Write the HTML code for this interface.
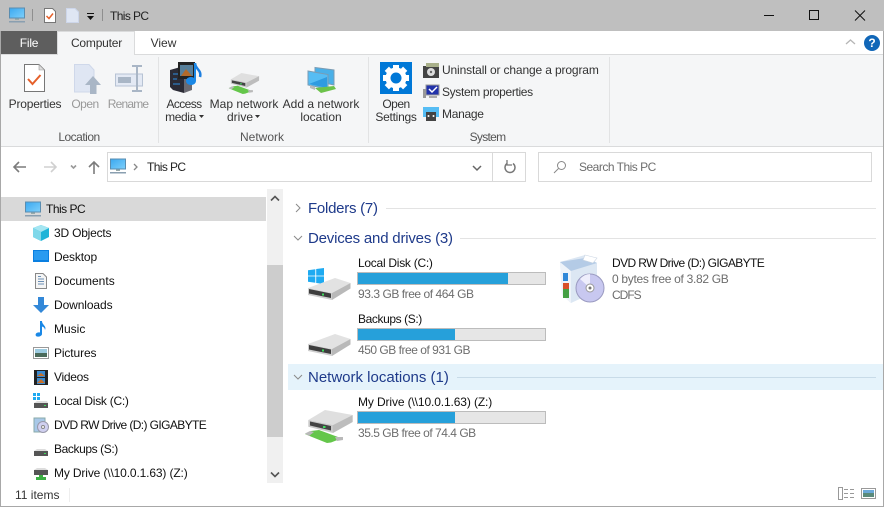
<!DOCTYPE html>
<html><head><meta charset="utf-8"><title>This PC</title>
<style>
html,body{margin:0;padding:0}
body{width:884px;height:507px;overflow:hidden;background:#fff;position:relative;font:12px/16px "Liberation Sans",sans-serif;color:#1a1a1a}
.t{position:absolute;white-space:nowrap;line-height:16px}
.c{text-align:center;transform:translateX(-50%)}
.b{position:absolute}
svg{position:absolute;overflow:visible}
.g{color:#6d6d6d}
.h{color:#1e3a8a;font-size:15px;line-height:20px}
.bar{position:absolute;left:357px;width:187px;height:11px;border:1px solid #bcbcbc;background:#e6e6e6}
.bar i{display:block;height:11px;background:#26a0da}
.nv{color:#111}
</style></head><body>
<svg width="0" height="0" style="position:absolute"><defs>
<linearGradient id="scr" x1="0" y1="0" x2="1" y2="1"><stop offset="0" stop-color="#3aa8f0"/><stop offset="1" stop-color="#7ed0fb"/></linearGradient>
<symbol id="pc" viewBox="0 0 16 16"><rect x="0.500" y="1" width="15" height="10" fill="url(#scr)" stroke="#5a8db0"/><rect x="6" y="11.500" width="4" height="1.500" fill="#9aa"/><rect y="14" width="16" height="1.500" fill="#8a9fb0"/></symbol>
<symbol id="hdd" viewBox="0 0 43 23"><path d="M0 10 27 0 42.500 5 24 15z" fill="#e2e2e2"/><path d="M24 15 42.500 5V10.500L24 22z" fill="#b9b9b9"/><path d="M0 10 24 15V22L0 17z" fill="#cfcfcf"/><path d="M1 11 23 15.500V20L1 15.500z" fill="#3d3d3d"/><rect x="14" y="15.500" width="2" height="2" fill="#3ddc5c"/></symbol>
<symbol id="net" viewBox="0 0 48 33"><path d="M3.300 10 20 0 47.700 5 28 15z" fill="#dfdfdf"/><path d="M28 15 47.700 5V12L28 23z" fill="#bdbdbd"/><path d="M3.300 10 28 15V23L3.300 16.700z" fill="#c9c9c9"/><path d="M5 11.500 26 16V20.500L5 15.500z" fill="#444"/><rect x="18" y="16" width="2.500" height="2" fill="#3ddc5c"/><path d="M0 24 6 21 14 20 33 27 35 29 26 32.500 22 33 7 27z" fill="#64c64a"/><path d="M0 23.500 5 21 9 22 4 26zM30 27 38 27 38 30 32 31z" fill="#b9b9b9"/></symbol>
</defs></svg>

<!-- title bar -->
<div class="b" style="left:0;top:0;width:884px;height:31px;background:#bfbfbf"></div>
<svg style="left:9px;top:7px" width="16" height="16"><use href="#pc"/></svg>
<div class="b" style="left:32px;top:9px;width:1px;height:12px;background:#8f8f8f"></div>
<svg style="left:44px;top:8px" width="12" height="15" viewBox="0 0 12 15"><path d="M.5.500H8.500L11.500 3.500V14.500H.5z" fill="#fff" stroke="#777"/><path d="M2.500 8 5 10.500 9 5.500" fill="none" stroke="#e5602a" stroke-width="1.500"/></svg>
<svg style="left:66px;top:8px" width="13" height="15" viewBox="0 0 13 15"><path d="M.5.500H9L12.500 4V14.500H.5z" fill="#dfe6f3" stroke="#cdd6ea"/></svg>
<svg style="left:86px;top:13px" width="9" height="9" viewBox="0 0 9 9"><rect x="1" y="0" width="7" height="1" fill="#111"/><path d="M1 3H8L4.500 7z" fill="#111"/></svg>
<div class="b" style="left:102px;top:9px;width:1px;height:12px;background:#8f8f8f"></div>
<div class="t" style="left:110px;top:8px;color:#222;letter-spacing:-.6px">This PC</div>
<svg style="left:760px;top:8px" width="120" height="16" viewBox="0 0 120 16" fill="none" stroke="#111"><path d="M4 7.500H14"/><rect x="49.500" y="2.500" width="9" height="9"/><path d="M95 2.500 105 12.500M105 2.500 95 12.500"/></svg>

<!-- tabs -->
<div class="b" style="left:0;top:31px;width:884px;height:24px;background:#fff"></div>
<div class="b" style="left:1px;top:31px;width:56px;height:23px;background:#5e5e5e"></div>
<div class="t c" style="left:29px;top:35px;color:#fff;letter-spacing:-.2px">File</div>
<div class="b" style="left:57px;top:31px;width:78px;height:24px;background:#f5f6f7;border:1px solid #dadbdc;border-bottom:0;box-sizing:border-box;z-index:2"></div>
<div class="t c" style="left:96.500px;top:35px;z-index:3;color:#333;letter-spacing:-.2px">Computer</div>
<div class="t c" style="left:163.500px;top:35px;color:#333">View</div>
<svg style="left:844px;top:37px" width="14" height="10" viewBox="0 0 14 10" fill="none" stroke="#b5b5b5" stroke-width="1.300"><path d="M2 7 6.500 3 11 7"/></svg>
<div class="b" style="left:864px;top:35px;width:16px;height:16px;border-radius:50%;background:#1167b8;color:#fff;font:bold 12px/16px 'Liberation Sans',sans-serif;text-align:center">?</div>

<!-- ribbon -->
<div class="b" style="left:1px;top:54px;width:882px;height:1px;background:#dadbdc"></div>
<div class="b" style="left:1px;top:55px;width:882px;height:91px;background:#f5f6f7"></div>
<div class="b" style="left:0;top:146px;width:884px;height:1px;background:#dadbdc"></div>
<div class="b" style="left:158px;top:57px;width:1px;height:86px;background:#e2e3e4"></div>
<div class="b" style="left:368px;top:57px;width:1px;height:86px;background:#e2e3e4"></div>
<div class="b" style="left:609px;top:57px;width:1px;height:86px;background:#e2e3e4"></div>

<svg style="left:24px;top:64px" width="21" height="28" viewBox="0 0 21 28"><path d="M.5.500H15L20.500 6V27.500H.5z" fill="#fff" stroke="#777"/><path d="M15 .5V6H20.500z" fill="#ddd" stroke="#999" stroke-width=".6"/><path d="M4 15 8.500 20 16.500 11" fill="none" stroke="#e5602a" stroke-width="2"/></svg>
<svg style="left:74px;top:64px" width="27" height="30" viewBox="0 0 27 30"><path d="M.5.500H15L20 6V28H.5z" fill="#dfe6f3" stroke="#cfd8ea"/><path d="M11 21 19 12 27 21H22.500V30H16V21z" fill="#a9b6c6"/></svg>
<svg style="left:115px;top:65px" width="28" height="27" viewBox="0 0 28 27"><rect x=".5" y="9" width="27" height="12" fill="#e3e9f4" stroke="#b7c3d4"/><rect x="3" y="12" width="13" height="6" fill="#a9b6c6"/><path d="M17 1H27M22 1V26M17 26H27" fill="none" stroke="#a9b6c6" stroke-width="2"/></svg>
<div class="t c" style="left:35px;top:96px;color:#333;letter-spacing:-.2px">Properties</div>
<div class="t c" style="left:85px;top:96px;color:#999;letter-spacing:-.5px">Open</div>
<div class="t c" style="left:128px;top:96px;color:#999;letter-spacing:-.8px">Rename</div>
<div class="t c" style="left:79px;top:129px;color:#555;letter-spacing:-.5px">Location</div>

<svg style="left:170px;top:62px" width="32" height="31" viewBox="0 0 32 31"><path d="M0 8 14 4V31L3 28 0 25z" fill="#2b2b36"/><path d="M14 6 22 9V28L14 31z" fill="#6a6a72"/><path d="M3 12H9M3 17H7M3 22H10" stroke="#2e8ee0"/><rect x="8" y="0" width="17" height="17" fill="#222"/><rect x="10" y="3" width="13" height="11" fill="#577f9a"/><path d="M11 14 16 7 22 14z" fill="#b36a2a"/><path d="M25 1C25 7 32 8 30 15" fill="none" stroke="#1d7fe0" stroke-width="2.500"/><ellipse cx="21" cy="19" rx="5" ry="4" fill="#1a88e6"/><path d="M25 19V1" stroke="#1a88e6" stroke-width="2"/></svg>
<svg style="left:228px;top:73px" width="32" height="21"><use href="#net"/></svg>
<svg style="left:307px;top:67px" width="29" height="27" viewBox="0 0 29 27"><path d="M8 .5 27 3V18L8 14z" fill="#4ab0e8" stroke="#7a9cb4"/><path d="M1 4 21 7.500V22L1 18z" fill="#56bdf4" stroke="#7a9cb4"/><path d="M2 17 20 10V21z" fill="#2f9be0"/><path d="M8 21 27 19 29 22 14 26z" fill="#6cc24a"/><path d="M3 18 8 20 8 23 3 21z" fill="#bbb"/></svg>
<div class="t c" style="left:184px;top:96px;color:#333;letter-spacing:-.6px">Access</div>
<div class="t c" style="left:180.500px;top:109px;color:#333;letter-spacing:-.4px">media</div>
<svg style="left:199px;top:115px" width="6" height="4"><path d="M0 0H5L2.500 3z" fill="#333"/></svg>
<div class="t c" style="left:244px;top:96px;color:#333">Map network</div>
<div class="t c" style="left:240px;top:109px;color:#333">drive</div>
<svg style="left:255px;top:115px" width="6" height="4"><path d="M0 0H5L2.500 3z" fill="#333"/></svg>
<div class="t c" style="left:321px;top:96px;color:#333">Add a network</div>
<div class="t c" style="left:321px;top:109px;color:#333">location</div>
<div class="t c" style="left:262px;top:129px;color:#555">Network</div>

<div class="b" style="left:380px;top:62px;width:32px;height:32px;background:#0078d7"></div>
<svg style="left:380px;top:62px" width="32" height="32" viewBox="0 0 32 32"><circle cx="16" cy="16" r="8" fill="none" stroke="#fff" stroke-width="5"/><g fill="#fff"><rect x="13" y="3" width="6" height="26"/><rect x="13" y="3" width="6" height="26" transform="rotate(45 16 16)"/><rect x="13" y="3" width="6" height="26" transform="rotate(90 16 16)"/><rect x="13" y="3" width="6" height="26" transform="rotate(135 16 16)"/></g><circle cx="16" cy="16" r="8" fill="#fff"/><circle cx="16" cy="16" r="5.500" fill="#0078d7"/></svg>
<div class="t c" style="left:396px;top:96px;color:#333;letter-spacing:-.5px">Open</div>
<div class="t c" style="left:396px;top:109px;color:#333;letter-spacing:-.25px">Settings</div>
<svg style="left:423px;top:62px" width="16" height="16" viewBox="0 0 16 16"><rect x="0" y="4" width="16" height="12" fill="#444"/><rect x="3" y="1" width="13" height="4" fill="#a9b08a"/><circle cx="8" cy="10" r="4" fill="#ddd"/><circle cx="8" cy="10" r="1.200" fill="#666"/></svg>
<svg style="left:423px;top:84px" width="16" height="16" viewBox="0 0 16 16"><rect x="3" y="1" width="13" height="10" fill="#2233aa" stroke="#999"/><path d="M6 5 9 8 14 3" fill="none" stroke="#fff" stroke-width="1.500"/><rect x="0" y="5" width="3" height="9" fill="#999"/><rect x="6" y="12" width="8" height="2" fill="#aaa"/></svg>
<svg style="left:423px;top:106px" width="16" height="16" viewBox="0 0 16 16"><rect x="0" y="1" width="16" height="10" fill="#56bdf4"/><rect x="3" y="6" width="10" height="9" fill="#444"/><circle cx="5.500" cy="10" r="1" fill="#fff"/><circle cx="10.500" cy="10" r="1" fill="#fff"/></svg>
<div class="t" style="left:442px;top:62px;color:#333;letter-spacing:-.14px">Uninstall or change a program</div>
<div class="t" style="left:442px;top:84px;color:#333;letter-spacing:-.35px">System properties</div>
<div class="t" style="left:442px;top:106px;color:#333;letter-spacing:-.3px">Manage</div>
<div class="t c" style="left:487.500px;top:129px;color:#555;letter-spacing:-.7px">System</div>

<!-- nav -->
<svg style="left:12px;top:159px" width="96" height="16" viewBox="0 0 96 16" fill="none" stroke-width="1.600"><path d="M2 8H14M7 3 2 8 7 13" stroke="#7c7c7c"/><path d="M32 8H44M39 3 44 8 39 13" stroke="#d0d0d0"/><path d="M59 6.500 61.500 9 64 6.500" stroke="#999"/><path d="M82 15V3M77 8 82 3 87 8" stroke="#7c7c7c"/></svg>
<div class="b" style="left:107px;top:152px;width:419px;height:30px;border:1px solid #d9d9d9;box-sizing:border-box"></div>
<div class="b" style="left:492px;top:153px;width:1px;height:28px;background:#d9d9d9"></div>
<svg style="left:110px;top:158px" width="16" height="16"><use href="#pc"/></svg>
<svg style="left:133px;top:163px" width="6" height="8" viewBox="0 0 6 8"><path d="M1 1 4 4 1 7" fill="none" stroke="#888" stroke-width="1.300"/></svg>
<div class="t" style="left:147px;top:159px;color:#222;letter-spacing:-.6px">This PC</div>
<svg style="left:472px;top:165px" width="10" height="6" viewBox="0 0 10 6"><path d="M1 1 5 5 9 1" fill="none" stroke="#666" stroke-width="1.500"/></svg>
<svg style="left:504px;top:160px" width="12" height="14" viewBox="0 0 12 14"><path d="M3 3.500A5 5 0 1 0 9 3.500" fill="none" stroke="#777" stroke-width="1.500"/><path d="M3 0V5H8" fill="none" stroke="#777" stroke-width="1.300"/></svg>
<div class="b" style="left:538px;top:152px;width:334px;height:30px;border:1px solid #d9d9d9;box-sizing:border-box"></div>
<svg style="left:553px;top:160px" width="14" height="14" viewBox="0 0 14 14" fill="none" stroke="#888"><circle cx="8.500" cy="5.500" r="4"/><path d="M5.500 8.500 1 13"/></svg>
<div class="t" style="left:579px;top:159px;color:#6d6d6d;letter-spacing:-.5px">Search This PC</div>

<!-- sidebar -->
<div class="b" style="left:1px;top:197px;width:265px;height:24px;background:#d9d9d9"></div>
<svg style="left:25px;top:201px" width="16" height="16"><use href="#pc"/></svg>
<div class="t nv" style="left:46px;top:201px;letter-spacing:-.5px">This PC</div>
<svg style="left:33px;top:225px" width="16" height="16" viewBox="0 0 16 16"><path d="M8 0 16 3V12L8 16 0 12V3z" fill="#1fb4d8"/><path d="M8 0 16 3 8 7 0 3z" fill="#a5e6f2"/><path d="M0 3 8 7V16L0 12z" fill="#7fd8ea"/></svg>
<div class="t nv" style="left:54px;top:225px;letter-spacing:-.2px">3D Objects</div>
<svg style="left:33px;top:250px" width="16" height="13" viewBox="0 0 16 13"><rect width="16" height="12" fill="#0a7fe0"/><rect x="1" y="1" width="14" height="9" fill="#2a9bf0"/></svg>
<div class="t nv" style="left:54px;top:249px;letter-spacing:-.15px">Desktop</div>
<svg style="left:35px;top:273px" width="12" height="16" viewBox="0 0 12 16"><path d="M.5.5H8L11.500 4V15.500H.5z" fill="#f5f5f5" stroke="#888"/><path d="M3 6H9M3 8.500H9M3 11H9M3 3.500H6" stroke="#6b8fb5"/></svg>
<div class="t nv" style="left:54px;top:273px">Documents</div>
<svg style="left:33px;top:297px" width="16" height="16" viewBox="0 0 16 16"><path d="M5 0H11V8H16L8 16 0 8H5z" fill="#3388d8"/></svg>
<div class="t nv" style="left:54px;top:297px;letter-spacing:-.1px">Downloads</div>
<svg style="left:35px;top:321px" width="12" height="16" viewBox="0 0 12 16"><path d="M5 0H7C7 4 12 5 10 9 9.500 6 8 6 7 5.500V13C7 15 4 16 2 15.500S0 12 3 11.500C4 11.300 5 11.500 5 11.500z" fill="#1a88e6"/></svg>
<div class="t nv" style="left:54px;top:321px">Music</div>
<svg style="left:33px;top:347px" width="16" height="12" viewBox="0 0 16 12"><rect x=".5" y=".5" width="15" height="11" fill="#fff" stroke="#999"/><rect x="2" y="2" width="12" height="4" fill="#9ccbe0"/><rect x="2" y="6" width="12" height="4" fill="#4a6a5a"/></svg>
<div class="t nv" style="left:54px;top:345px;letter-spacing:-.12px">Pictures</div>
<svg style="left:34px;top:370px" width="14" height="15" viewBox="0 0 14 15"><rect width="14" height="15" fill="#222"/><rect x="3" y="1" width="8" height="6" fill="#3a8ad0"/><rect x="3" y="8" width="8" height="6" fill="#3a8ad0"/><path d="M3 6 7 3 11 6zM3 13 7 9 11 13z" fill="#c8702a"/></svg>
<div class="t nv" style="left:54px;top:369px;letter-spacing:-.3px">Videos</div>
<svg style="left:33px;top:393px" width="16" height="16" viewBox="0 0 16 16"><path d="M0 0H3V3H0zM4 0H7V3H4zM0 4H3V7H0zM4 4H7V7H4z" fill="#1eaaf1"/><path d="M1 10 4 8H14L15 10z" fill="#ddd"/><rect x="1" y="10" width="14" height="5" fill="#555"/><rect x="11" y="12" width="2" height="1" fill="#3ddc5c"/></svg>
<div class="t nv" style="left:54px;top:393px;letter-spacing:-.27px">Local Disk (C:)</div>
<svg style="left:33px;top:417px" width="16" height="16" viewBox="0 0 16 16"><rect x="1" y="1" width="11" height="14" fill="#a8c8e8" stroke="#8aa"/><circle cx="10" cy="10" r="5.500" fill="#d0d0f0" stroke="#99a"/><circle cx="10" cy="10" r="1.500" fill="#fff" stroke="#888"/></svg>
<div class="t nv" style="left:54px;top:417px;letter-spacing:-.6px">DVD RW Drive (D:) GIGABYTE</div>
<svg style="left:33px;top:441px" width="16" height="16" viewBox="0 0 16 16"><path d="M1 10 4 8H12L15 10z" fill="#ddd"/><rect x="1" y="10" width="14" height="5" fill="#555"/><rect x="11" y="12" width="2" height="1" fill="#3ddc5c"/></svg>
<div class="t nv" style="left:54px;top:441px;letter-spacing:-.4px">Backups (S:)</div>
<svg style="left:33px;top:465px" width="16" height="16" viewBox="0 0 16 16"><path d="M1 5 4 3H12L15 5z" fill="#ddd"/><rect x="1" y="5" width="14" height="5" fill="#555"/><path d="M6 10H10V12H13V15H3V12H6z" fill="#3cb043"/></svg>
<div class="t nv" style="left:54px;top:465px;letter-spacing:-.14px">My Drive (\\10.0.1.63) (Z:)</div>

<!-- scrollbar -->
<div class="b" style="left:267px;top:189px;width:16px;height:294px;background:#f0f0f0"></div>
<div class="b" style="left:267px;top:265px;width:16px;height:172px;background:#cdcdcd"></div>
<svg style="left:270px;top:195px" width="10" height="7" viewBox="0 0 10 7"><path d="M1 5.500 5 1.500 9 5.500" fill="none" stroke="#555" stroke-width="1.600"/></svg>
<svg style="left:270px;top:471px" width="10" height="7" viewBox="0 0 10 7"><path d="M1 1.500 5 5.500 9 1.500" fill="none" stroke="#555" stroke-width="1.600"/></svg>

<!-- content -->
<svg style="left:293px;top:203px" width="10" height="10" viewBox="0 0 10 10"><path d="M3 1 7 5 3 9" fill="none" stroke="#8a8a8a"/></svg>
<div class="t h" style="left:308px;top:199px;letter-spacing:-.25px">Folders (7)</div>
<div class="b" style="left:386px;top:208px;width:490px;height:1px;background:#e3e3e3"></div>
<svg style="left:293px;top:233px" width="10" height="10" viewBox="0 0 10 10"><path d="M1 3 5 7 9 3" fill="none" stroke="#8a8a8a"/></svg>
<div class="t h" style="left:308px;top:229px;letter-spacing:-.2px">Devices and drives (3)</div>
<div class="b" style="left:460px;top:238px;width:416px;height:1px;background:#e3e3e3"></div>

<svg style="left:308px;top:268px" width="16" height="16" viewBox="0 0 16 16"><path d="M0 2.300 7.300 1.200V7.600H0zM8.200 1 16 0V7.600H8.200zM0 8.400H7.300V14.800L0 13.700zM8.200 8.400H16V16L8.200 15z" fill="#1eaaf1"/></svg>
<svg style="left:308px;top:278px" width="43" height="23"><use href="#hdd"/></svg>
<div class="t nv" style="left:358px;top:255px;letter-spacing:-.27px">Local Disk (C:)</div>
<div class="bar" style="top:272px"><i style="width:150px"></i></div>
<div class="t g" style="left:358px;top:286px;letter-spacing:-.45px">93.3 GB free of 464 GB</div>

<svg style="left:308px;top:334px" width="43" height="23"><use href="#hdd"/></svg>
<div class="t nv" style="left:358px;top:311px;letter-spacing:-.4px">Backups (S:)</div>
<div class="bar" style="top:328px"><i style="width:97px"></i></div>
<div class="t g" style="left:358px;top:342px;letter-spacing:-.48px">450 GB free of 931 GB</div>

<svg style="left:559px;top:255px" width="45" height="49" viewBox="0 0 45 49"><path d="M1 7 26 0 38 8V36L12 48 3 40z" fill="#dce7f3"/><path d="M1 7 12 16V48L3 40z" fill="#eef3f9"/><path d="M12 16 38 8 26 3 1 7z" fill="#b4cbe6"/><path d="M26 0 38 3 34 8 24 5z" fill="#fff" stroke="#c8d4e2" stroke-width=".6"/><rect x="4" y="18" width="5" height="8" fill="#3088d8"/><rect x="4" y="28" width="6" height="6" fill="#d8502a"/><rect x="4" y="34" width="6" height="9" fill="#44a044"/><circle cx="31" cy="33" r="14" fill="#c8c8f0" stroke="#9a9ac0"/><path d="M31 33 21 24A14 14 0 0 1 31 19z" fill="#eeeefc"/><circle cx="31" cy="33" r="4" fill="#fff" stroke="#999"/><circle cx="31" cy="33" r="1.500" fill="#777"/></svg>
<div class="t nv" style="left:612px;top:255px;letter-spacing:-.6px">DVD RW Drive (D:) GIGABYTE</div>
<div class="t g" style="left:612px;top:271px;letter-spacing:-.3px">0 bytes free of 3.82 GB</div>
<div class="t g" style="left:612px;top:287px;letter-spacing:-1px">CDFS</div>

<div class="b" style="left:288px;top:364px;width:595px;height:26px;background:#e5f3fb"></div>
<svg style="left:293px;top:372px" width="10" height="10" viewBox="0 0 10 10"><path d="M1 3 5 7 9 3" fill="none" stroke="#8a8a8a"/></svg>
<div class="t h" style="left:308px;top:368px">Network locations (1)</div>
<div class="b" style="left:457px;top:377px;width:419px;height:1px;background:#c8dbe8"></div>

<svg style="left:305px;top:410px" width="48" height="33"><use href="#net"/></svg>
<div class="t nv" style="left:358px;top:394px;letter-spacing:-.12px">My Drive (\\10.0.1.63) (Z:)</div>
<div class="bar" style="top:411px"><i style="width:97px"></i></div>
<div class="t g" style="left:358px;top:425px;letter-spacing:-.48px">35.5 GB free of 74.4 GB</div>

<!-- status -->
<div class="t" style="left:15px;top:487px;color:#333">11 items</div>
<div class="b" style="left:69px;top:488px;width:1px;height:14px;background:#eee"></div>
<svg style="left:838px;top:487px" width="17" height="13" viewBox="0 0 17 13" fill="none" stroke="#999"><rect x=".5" y=".5" width="4" height="12"/><path d="M6 2.500H10M12 2.500H16M6 6.500H10M12 6.500H16M6 10.500H10M12 10.500H16"/></svg>
<svg style="left:861px;top:488px" width="15" height="11" viewBox="0 0 15 11"><rect x=".5" y=".5" width="14" height="10" fill="#fff" stroke="#999"/><rect x="2" y="2" width="11" height="3" fill="#6aa8d8"/><rect x="2" y="5" width="11" height="4" fill="#5a8a7a"/></svg>

<!-- window border -->
<div class="b" style="left:0;top:31px;width:1px;height:476px;background:#a8a8a8"></div>
<div class="b" style="left:883px;top:31px;width:1px;height:476px;background:#a8a8a8"></div>
<div class="b" style="left:0;top:506px;width:884px;height:1px;background:#a8a8a8"></div>
</body></html>
